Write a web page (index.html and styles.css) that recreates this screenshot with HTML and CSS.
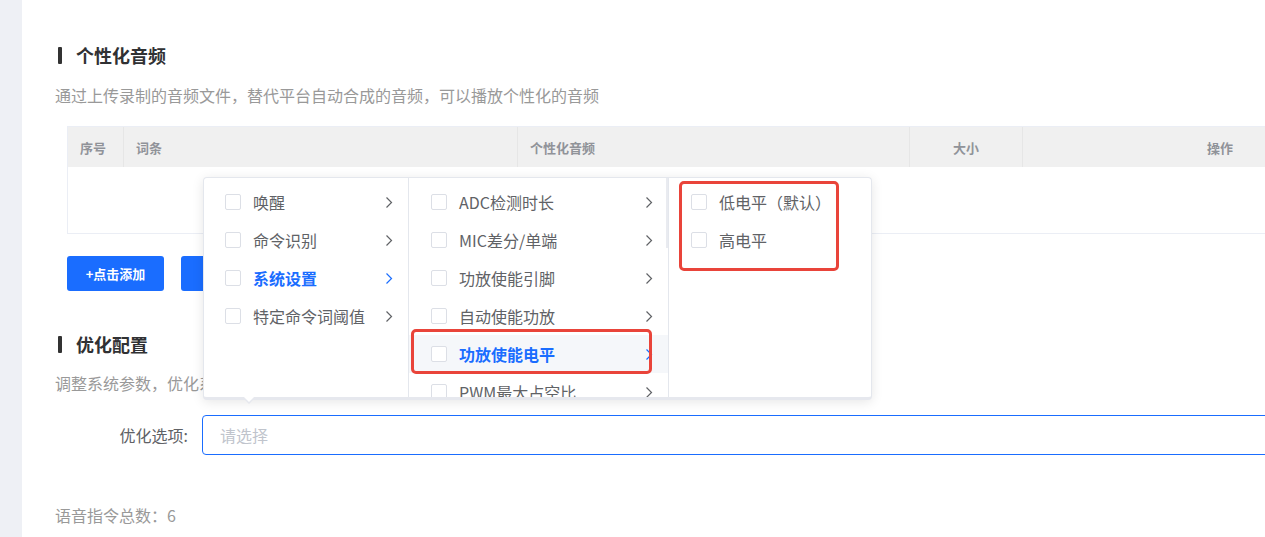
FILE: index.html
```html
<!DOCTYPE html>
<html lang="zh-CN">
<head>
    <meta charset="UTF-8">
    <meta name="viewport" content="width=device-width, initial-scale=1.0">
    <title>语音配置</title>
    <link rel="stylesheet" href="styles.css">
</head>
<body>
    <div class="layout">
        <aside class="side"></aside>

        <main class="main">
            <section class="block">
                <h2 class="block-title">个性化音频</h2>
                <p class="block-desc">通过上传录制的音频文件，替代平台自动合成的音频，可以播放个性化的音频</p>

                <div class="table">
                    <div class="table-head">
                        <div class="th">序号</div>
                        <div class="th">词条</div>
                        <div class="th">个性化音频</div>
                        <div class="th center">大小</div>
                        <div class="th center">操作</div>
                    </div>
                    <div class="table-body"></div>
                </div>

                <div class="actions">
                    <button class="btn">+点击添加</button>
                    <button class="btn">试听全部</button>
                </div>
            </section>

            <section class="block">
                <h2 class="block-title second">优化配置</h2>
                <p class="block-desc">调整系统参数，优化系统的识别效果与播放表现</p>

                <div class="form-row">
                    <label class="form-label">优化选项:</label>
                    <div class="select">
                        <span class="placeholder">请选择</span>

                        <!-- cascader dropdown -->
                        <div class="cascader">
                            <div class="menu menu-first">
                                <div class="item"><span class="check"></span><span class="label">唤醒</span><svg class="chev" viewBox="0 0 8 12"><path d="M1.5 1l5 5-5 5"/></svg></div>
                                <div class="item"><span class="check"></span><span class="label">命令识别</span><svg class="chev" viewBox="0 0 8 12"><path d="M1.5 1l5 5-5 5"/></svg></div>
                                <div class="item active"><span class="check"></span><span class="label">系统设置</span><svg class="chev" viewBox="0 0 8 12"><path d="M1.5 1l5 5-5 5"/></svg></div>
                                <div class="item"><span class="check"></span><span class="label">特定命令词阈值</span><svg class="chev" viewBox="0 0 8 12"><path d="M1.5 1l5 5-5 5"/></svg></div>
                            </div>
                            <div class="menu menu-second">
                                <div class="item"><span class="check"></span><span class="label">ADC检测时长</span><svg class="chev" viewBox="0 0 8 12"><path d="M1.5 1l5 5-5 5"/></svg></div>
                                <div class="item"><span class="check"></span><span class="label">MIC差分/单端</span><svg class="chev" viewBox="0 0 8 12"><path d="M1.5 1l5 5-5 5"/></svg></div>
                                <div class="item"><span class="check"></span><span class="label">功放使能引脚</span><svg class="chev" viewBox="0 0 8 12"><path d="M1.5 1l5 5-5 5"/></svg></div>
                                <div class="item"><span class="check"></span><span class="label">自动使能功放</span><svg class="chev" viewBox="0 0 8 12"><path d="M1.5 1l5 5-5 5"/></svg></div>
                                <div class="item active hover"><span class="check"></span><span class="label">功放使能电平</span><svg class="chev" viewBox="0 0 8 12"><path d="M1.5 1l5 5-5 5"/></svg></div>
                                <div class="item"><span class="check"></span><span class="label">PWM最大占空比</span><svg class="chev" viewBox="0 0 8 12"><path d="M1.5 1l5 5-5 5"/></svg></div>
                                <span class="thumb"></span>
                            </div>
                            <div class="menu menu-third">
                                <div class="item"><span class="check"></span><span class="label">低电平（默认）</span></div>
                                <div class="item"><span class="check"></span><span class="label">高电平</span></div>
                            </div>

                            <!-- red annotation boxes -->
                            <span class="mark mark-level"></span>
                            <span class="mark mark-options"></span>
                        </div>
                    </div>
                </div>
            </section>

            <p class="total">语音指令总数：6</p>
        </main>
    </div>
</body>
</html>
```

FILE: styles.css
```css
html, body {
    margin: 0;
    padding: 0;
    overflow: hidden;
    background-color: #fff;
}

body {
    font-family: "Noto Sans CJK SC", "Liberation Sans", sans-serif;
    color: #606266;
}

.layout {
    display: flex;
    width: 1417px;
    min-height: 537px;
}

.side {
    width: 22px;
    flex-shrink: 0;
    background-color: #eef0f5;
}

.main {
    flex: 1;
    padding: 43px 0 0 33px;
}

/* Section titles */
.block-title {
    display: flex;
    align-items: center;
    margin: 0 0 0 3px;
    font-size: 18px;
    line-height: 24px;
    font-weight: bold;
    color: #303133;
}

.block-title::before {
    content: '';
    width: 4px;
    height: 17px;
    margin-right: 14px;
    border-radius: 1px;
    background-color: #333;
}

.block-title.second {
    margin-top: 41px;
}

.block-desc {
    margin: 17px 0 0;
    font-size: 16px;
    line-height: 22px;
    color: #999;
}

.block-title.second + .block-desc {
    margin-top: 16px;
}

/* Table */
.table {
    margin: 20px 0 0 12px;
    border: 1px solid #ebeef5;
    border-right: none;
}

.table-head {
    display: grid;
    grid-template-columns: 56px 394px 392px 113px 1fr;
    height: 40px;
    background-color: #f0f0f0;
}

.th {
    display: flex;
    align-items: center;
    padding-left: 12px;
    font-size: 13px;
    font-weight: bold;
    color: #909399;
    border-right: 1px solid #e6e6e6;
}

.th.center {
    justify-content: center;
    padding-left: 0;
}

.th:last-child {
    border-right: none;
}

.table-body {
    height: 66px;
}

/* Buttons */
.actions {
    display: flex;
    gap: 17px;
    margin: 22px 0 0 12px;
}

.btn {
    width: 97px;
    height: 35px;
    padding: 0;
    border: none;
    border-radius: 3px;
    background-color: #1a6dff;
    color: #fff;
    font-family: inherit;
    font-size: 13px;
    font-weight: bold;
    cursor: pointer;
}

/* Form */
.form-row {
    display: flex;
    align-items: center;
    margin-top: 21px;
}

.form-label {
    width: 133px;
    padding-right: 14px;
    text-align: right;
    font-size: 16px;
    color: #606266;
}

.select {
    position: relative;
    flex: 1;
    height: 38px;
    display: flex;
    align-items: center;
    padding-left: 17px;
    border: 1px solid #1a6dff;
    border-radius: 4px;
    font-size: 16px;
}

.placeholder {
    color: #c0c4cc;
}

.total {
    margin: 49px 0 0;
    font-size: 16px;
    line-height: 22px;
    color: #999;
}

/* Cascader dropdown */
.cascader {
    position: absolute;
    left: 0;
    bottom: calc(100% + 16px);
    display: flex;
    border: 1px solid #e4e7ed;
    border-bottom: 3px solid #e6e8ee;
    border-radius: 4px;
    background-color: #fff;
    box-shadow: 0 2px 12px rgba(0, 0, 0, 0.1);
    z-index: 10;
}

.cascader::before,
.cascader::after {
    content: '';
    position: absolute;
    left: 38px;
    top: 100%;
    border-left: 7px solid transparent;
    border-right: 7px solid transparent;
    border-top: 7px solid #e6e8ee;
}

.cascader::after {
    left: 39px;
    border-left-width: 6px;
    border-right-width: 6px;
    border-top: 6px solid #fff;
    margin-top: -1px;
}

.menu {
    position: relative;
    height: 214px;
    padding-top: 5px;
    overflow: hidden;
}

.menu-first {
    width: 204px;
    border-right: 1px solid #e4e7ed;
}

.menu-second {
    width: 259px;
    border-right: 1px solid #e4e7ed;
}

.menu-third {
    width: 202px;
}

.item {
    display: flex;
    align-items: center;
    height: 38px;
    padding: 0 15px 0 21px;
    font-size: 16px;
    color: #606266;
}

.menu-second .item,
.menu-third .item {
    padding-left: 22px;
}

.item.hover {
    background-color: #f5f7fa;
}

.item.active .label {
    color: #1a6dff;
    font-weight: bold;
}

.check {
    width: 14px;
    height: 14px;
    margin-right: 12px;
    border: 1px solid #dcdfe6;
    border-radius: 2px;
    background-color: #fff;
}

.label {
    flex: 1;
    white-space: nowrap;
}

.chev {
    width: 8px;
    height: 13px;
    fill: none;
    stroke: #606266;
    stroke-width: 1.2;
}

.item.active .chev {
    stroke: #1a6dff;
}

.thumb {
    position: absolute;
    right: 0;
    top: 0;
    width: 2px;
    height: 70px;
    background-color: #e9ebf0;
}

/* Annotation marks */
.mark {
    position: absolute;
    border: 3px solid #e9443a;
    border-radius: 5px;
    pointer-events: none;
}

.mark-level {
    left: 475px;
    top: 3px;
    width: 154px;
    height: 84px;
}

.mark-options {
    left: 207px;
    top: 151px;
    width: 235px;
    height: 39px;
}
```
